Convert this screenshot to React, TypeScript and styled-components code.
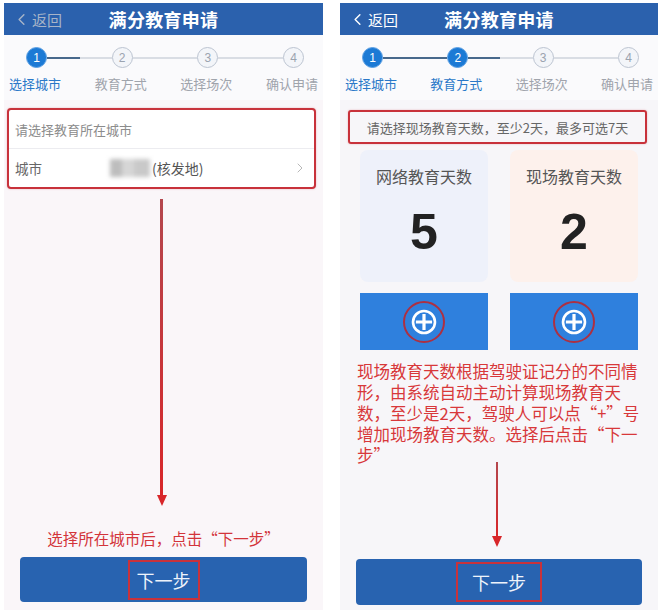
import React from "react"
import styled, { createGlobalStyle } from "styled-components"
import { ChevronLeft, ChevronRight } from "lucide-react"

const GlobalStyle = createGlobalStyle`
  body {
    margin: 0;
    background: #ffffff;
    font-family: "Noto Sans CJK SC", "Noto Sans", sans-serif;
  }
`

const RED = "#c8323b"

const Page = styled.div`
  display: flex;
  gap: 17px;
  padding: 3px 0 0 4px;
  height: 610px;
  box-sizing: border-box;
  overflow: hidden;
`

const Phone = styled.div<{ $width: number; $bg: string }>`
  width: ${(p) => p.$width}px;
  flex-shrink: 0;
  display: flex;
  flex-direction: column;
  background: ${(p) => p.$bg};
`

const Header = styled.header`
  height: 32px;
  flex-shrink: 0;
  background: #2b61ad;
  display: grid;
  grid-template-columns: 1fr auto 1fr;
  align-items: center;
`

const BackLink = styled.span<{ $muted?: boolean }>`
  display: flex;
  align-items: center;
  gap: 1px;
  padding-left: 8px;
  font-size: 15px;
  color: ${(p) => (p.$muted ? "#a7b4c8" : "#ffffff")};
`

const Title = styled.h1`
  margin: 0;
  font-size: 18px;
  font-weight: 700;
  color: #ffffff;
  letter-spacing: 0.3px;
`

const Stepper = styled.div`
  padding: 12px 0 7px;
  flex-shrink: 0;
  background: #fafafc;
`

const CircleRow = styled.div`
  display: flex;
  align-items: center;
  padding: 0 19px 0 22px;
`

const StepCircle = styled.span<{ $active: boolean }>`
  width: 21px;
  height: 21px;
  box-sizing: border-box;
  border-radius: 50%;
  display: flex;
  align-items: center;
  justify-content: center;
  font-size: 12px;
  font-family: "Liberation Sans", sans-serif;
  background: ${(p) => (p.$active ? "#1c7ad5" : "#f3f5f9")};
  border: 1.5px solid ${(p) => (p.$active ? "#5ea1e4" : "#bcc4d1")};
  color: ${(p) => (p.$active ? "#ffffff" : "#9ba3af")};
`

type Fill = "full" | "half" | "none"

const Connector = styled.span<{ $fill: Fill }>`
  flex: 1;
  height: 2px;
  background: ${(p) =>
    p.$fill === "full"
      ? "#48698c"
      : p.$fill === "half"
      ? "linear-gradient(to right, #48698c 50%, #d9dde4 50%)"
      : "#d9dde4"};
`

const LabelRow = styled.div`
  display: flex;
  justify-content: space-between;
  padding: 0 5px;
  margin-top: 7px;
`

const StepLabel = styled.span<{ $active: boolean }>`
  font-size: 13px;
  line-height: 18px;
  color: ${(p) => (p.$active ? "#2a78c8" : "#a0a4ac")};
`

const Body = styled.div<{ $bottom: number }>`
  flex: 1;
  display: flex;
  flex-direction: column;
  padding-bottom: ${(p) => p.$bottom}px;
`

const CityBox = styled.div`
  margin: 8px 7px 0 3px;
  border: 2px solid ${RED};
  border-radius: 4px;
  background: #ffffff;
  box-shadow: 0 0 2px rgba(200, 50, 58, 0.35);
`

const BoxRow = styled.div`
  height: 38px;
  display: flex;
  align-items: center;
  padding: 0 6px;
  font-size: 13px;
  color: #8c8c8c;

  & + & {
    border-top: 1px solid #ececf0;
  }
`

const CityLabel = styled.span`
  width: 95px;
  font-size: 13.5px;
  color: #666666;
`

const Mosaic = styled.span`
  width: 40px;
  height: 18px;
  background: linear-gradient(to right, #bdbdbd 0 30%, #d6d6d6 30% 60%, #c9c9c9 60%);
  filter: blur(2px);
`

const Province = styled.span`
  font-size: 14px;
  color: #555555;
  margin-left: 2px;
`

const RowChevron = styled.span`
  margin-left: auto;
  display: flex;
  color: #b8b8b8;
`

const ArrowTrack = styled.div<{ $top: number; $bottom: number }>`
  flex: 1;
  display: flex;
  flex-direction: column;
  align-items: center;
  margin: ${(p) => p.$top}px 4px ${(p) => p.$bottom}px 0;
`

const ArrowShaft = styled.span`
  flex: 1;
  width: 2.5px;
  background: linear-gradient(#b4474e, #d8262a);
`

const ArrowHead = styled.span`
  width: 0;
  height: 0;
  border-left: 5px solid transparent;
  border-right: 5px solid transparent;
  border-top: 11px solid #d8262a;
`

const Hint = styled.p`
  margin: 0;
  text-align: center;
  font-size: 15.5px;
  line-height: 20px;
  color: #d3343a;
`

const NextButton = styled.button<{ $height: number; $top: number }>`
  margin: ${(p) => p.$top}px 16px 0;
  height: ${(p) => p.$height}px;
  border: none;
  border-radius: 4px;
  background: #2863b0;
  display: flex;
  align-items: center;
  justify-content: center;
  font-family: inherit;
  padding: 0;
`

const ButtonMark = styled.span<{ $padX: number }>`
  height: 40px;
  box-sizing: border-box;
  padding: 0 ${(p) => p.$padX}px;
  border: 2px solid ${RED};
  display: flex;
  align-items: center;
  font-size: 18px;
  color: #eef3fb;
`

const NoticeBox = styled.div`
  margin: 10px 11px 0 8px;
  height: 34px;
  box-sizing: border-box;
  border: 2px solid ${RED};
  border-radius: 3px;
  box-shadow: 0 0 2px rgba(200, 50, 58, 0.35);
  display: flex;
  align-items: center;
  justify-content: center;
  font-size: 13px;
  color: #666666;
`

const TileRow = styled.div<{ $top: number }>`
  display: grid;
  grid-template-columns: 1fr 1fr;
  gap: 22px;
  padding: 0 20px;
  margin-top: ${(p) => p.$top}px;
`

const DayCard = styled.div<{ $tone: "online" | "onsite" }>`
  height: 132px;
  border-radius: 8px;
  background: ${(p) => (p.$tone === "online" ? "#eef1fa" : "#fdf1ec")};
  display: flex;
  flex-direction: column;
  align-items: center;
  padding-top: 15px;
  box-sizing: border-box;
`

const CardLabel = styled.span`
  font-size: 16px;
  line-height: 22px;
  color: #555555;
`

const CardNumber = styled.span`
  margin-top: 20px;
  font-family: "Liberation Sans", sans-serif;
  font-size: 50px;
  font-weight: 700;
  line-height: 50px;
  color: #222222;
`

const PlusTile = styled.button`
  height: 57px;
  border: none;
  padding: 0;
  background: #2f80dd;
  display: flex;
  align-items: center;
  justify-content: center;
`

const PlusRing = styled.span`
  width: 42px;
  height: 42px;
  box-sizing: border-box;
  border: 2px solid #ad3042;
  border-radius: 50%;
  display: flex;
  align-items: center;
  justify-content: center;
`

const Note = styled.p`
  margin: 11px 0 0 17px;
  font-size: 16.5px;
  line-height: 21px;
  color: #d8383a;
  white-space: nowrap;
`

const NoteLine = styled.span`
  display: block;
`

const steps = ["选择城市", "教育方式", "选择场次", "确认申请"]

function StepBar({ active }: { active: number }) {
  return (
    <Stepper>
      <CircleRow>
        {steps.map((_, i) => (
          <React.Fragment key={i}>
            <StepCircle $active={i < active}>{i + 1}</StepCircle>
            {i < steps.length - 1 && (
              <Connector $fill={i + 1 < active ? "full" : i + 1 === active ? "half" : "none"} />
            )}
          </React.Fragment>
        ))}
      </CircleRow>
      <LabelRow>
        {steps.map((s, i) => (
          <StepLabel key={s} $active={i < active}>
            {s}
          </StepLabel>
        ))}
      </LabelRow>
    </Stepper>
  )
}

function TopBar({ muted }: { muted?: boolean }) {
  return (
    <Header>
      <BackLink $muted={muted}>
        <ChevronLeft size={19} strokeWidth={1.8} />
        返回
      </BackLink>
      <Title>满分教育申请</Title>
      <span />
    </Header>
  )
}

function PlusIcon() {
  return (
    <svg width="26" height="26" viewBox="0 0 26 26">
      <circle cx="13" cy="13" r="11" fill="none" stroke="#ffffff" strokeWidth="2.6" />
      <path d="M13 6.5v13M6.5 13h13" stroke="#ffffff" strokeWidth="3.2" strokeLinecap="square" />
    </svg>
  )
}

function Arrow({ top, bottom }: { top: number; bottom: number }) {
  return (
    <ArrowTrack $top={top} $bottom={bottom}>
      <ArrowShaft />
      <ArrowHead />
    </ArrowTrack>
  )
}

const noteLines = [
  "现场教育天数根据驾驶证记分的不同情",
  "形，由系统自动主动计算现场教育天",
  "数，至少是2天，驾驶人可以点“+”号",
  "增加现场教育天数。选择后点击“下一",
  "步”",
]

export default function App() {
  return (
    <>
      <GlobalStyle />
      <Page>
        <Phone $width={319} $bg="#faf6f9">
          <TopBar muted />
          <StepBar active={1} />
          <Body $bottom={8}>
            <CityBox>
              <BoxRow>请选择教育所在城市</BoxRow>
              <BoxRow>
                <CityLabel>城市</CityLabel>
                <Mosaic />
                <Province>(核发地)</Province>
                <RowChevron>
                  <ChevronRight size={16} strokeWidth={1.5} />
                </RowChevron>
              </BoxRow>
            </CityBox>
            <Arrow top={10} bottom={22} />
            <Hint>选择所在城市后，点击“下一步”</Hint>
            <NextButton $height={45} $top={9}>
              <ButtonMark $padX={7}>下一步</ButtonMark>
            </NextButton>
          </Body>
        </Phone>

        <Phone $width={318} $bg="#f7f6f9">
          <TopBar />
          <StepBar active={2} />
          <Body $bottom={5}>
            <NoticeBox>请选择现场教育天数，至少2天，最多可选7天</NoticeBox>
            <TileRow $top={6}>
              <DayCard $tone="online">
                <CardLabel>网络教育天数</CardLabel>
                <CardNumber>5</CardNumber>
              </DayCard>
              <DayCard $tone="onsite">
                <CardLabel>现场教育天数</CardLabel>
                <CardNumber>2</CardNumber>
              </DayCard>
            </TileRow>
            <TileRow $top={11}>
              <PlusTile>
                <PlusRing>
                  <PlusIcon />
                </PlusRing>
              </PlusTile>
              <PlusTile>
                <PlusRing>
                  <PlusIcon />
                </PlusRing>
              </PlusTile>
            </TileRow>
            <Note>
              {noteLines.map((line) => (
                <NoteLine key={line}>{line}</NoteLine>
              ))}
            </Note>
            <Arrow top={-4} bottom={6} />
            <NextButton $height={46} $top={6}>
              <ButtonMark $padX={14}>下一步</ButtonMark>
            </NextButton>
          </Body>
        </Phone>
      </Page>
    </>
  )
}
